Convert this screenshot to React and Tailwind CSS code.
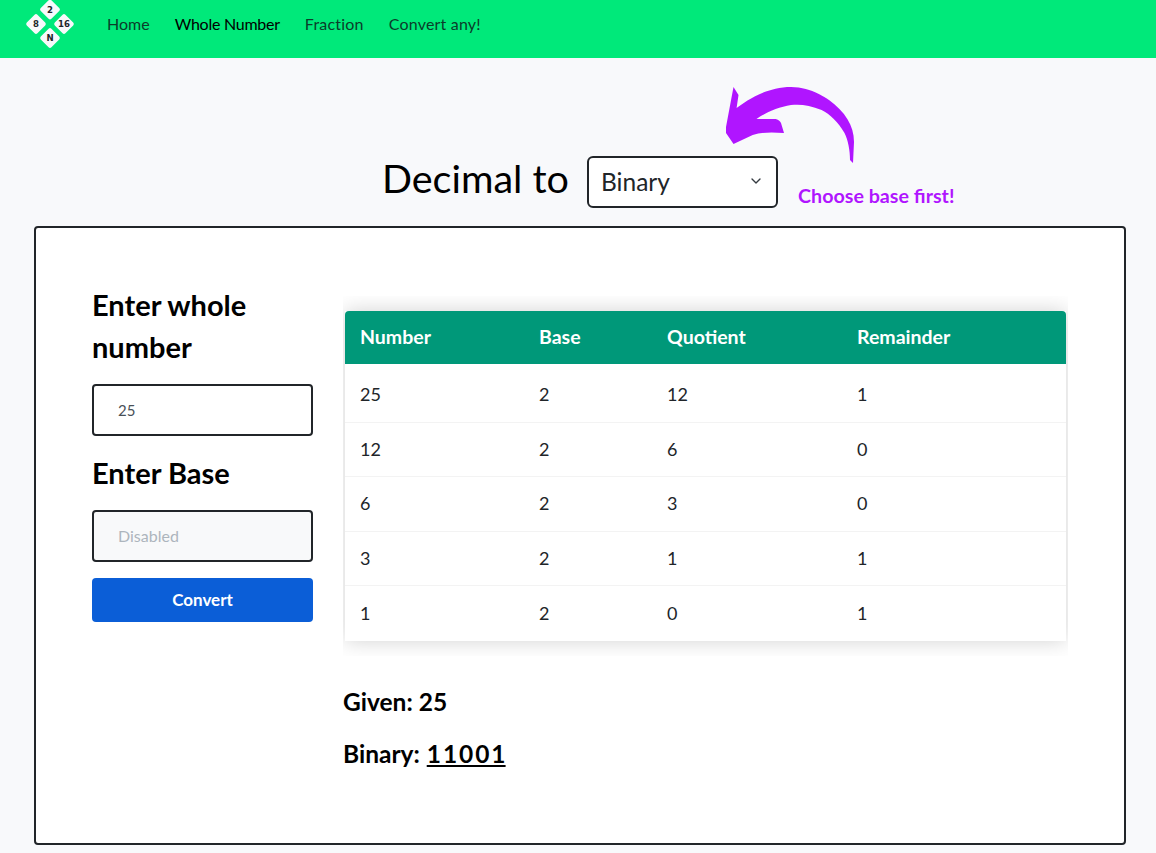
import React from 'react';
import { ChevronDown } from 'lucide-react';

const font = { fontFamily: 'Lato, "Open Sans", sans-serif' };

const rows = [
  [25, 2, 12, 1],
  [12, 2, 6, 0],
  [6, 2, 3, 0],
  [3, 2, 1, 1],
  [1, 2, 0, 1],
];

function Logo() {
  const tiles = [
    { x: 50, y: 9.5, label: '2' },
    { x: 36, y: 24, label: '8' },
    { x: 64, y: 24, label: '16' },
    { x: 50, y: 38, label: 'N' },
  ];
  return (
    <svg viewBox="25 0 50 50" className="w-[50px] h-[50px] shrink-0 -mt-[8px]">
      {tiles.map(t => (
        <g key={t.label}>
          <rect x={t.x - 7.5} y={t.y - 7.5} width="15" height="15" rx="2" fill="#f8f9fb" transform={`rotate(45 ${t.x} ${t.y})`} />
          <text x={t.x} y={t.y + 3.3} textAnchor="middle" fontSize="9.5" fontWeight="700" fill="#212529" fontFamily="'Liberation Sans Narrow', 'DejaVu Sans Condensed', sans-serif">{t.label}</text>
        </g>
      ))}
    </svg>
  );
}

function Arrow() {
  return (
    <svg viewBox="720 80 140 90" className="absolute left-[720px] top-[22px] w-[140px] h-[90px]">
      <path
        fill="#b015ff"
        d="M733.5 87 L738.5 95 L736.6 108 C745 102 765 87 791 87 C812 87 829 100 829 100 C845 112 854 125 854 142 L853 163 L850 160 C850 150 848 140 844.5 133 C838 122 830 114 821.6 110 C810 105 800 104 791 105 C778 107 765 113 756.5 119 L775.7 119 C779 120 780 121 781 123 L784 133 C772 132 762 132 752.7 135 L733.5 144 L726 133 L726 127 Z"
      />
    </svg>
  );
}

export default function App() {
  return (
    <div className="min-h-[853px] bg-[#f8f9fb] text-black" style={font}>
      <nav className="h-[58px] bg-[#00e97a] flex items-center pl-[25px]">
        <Logo />
        <ul className="flex items-center gap-[25px] ml-[32px] text-[16px] -mt-[10px] text-[#0b3d2a]">
          <li>Home</li>
          <li className="text-black tracking-[-0.25px]">Whole Number</li>
          <li className="tracking-[0.2px]">Fraction</li>
          <li className="tracking-[0.2px]">Convert any!</li>
        </ul>
      </nav>

      <div className="relative flex justify-center gap-[17px] pl-[4px] pt-[98px] pb-[18px]">
        <h1 className="text-[39.5px] leading-[44px] font-normal self-start w-[188px] whitespace-nowrap">Decimal to</h1>
        <div className="relative w-[191px] h-[52px]">
          <select className="w-full h-full appearance-none bg-white border-2 border-[#212529] rounded-[6px] pl-[12px] pt-[1px] text-[24.5px] text-[#212529]">
            <option>Binary</option>
          </select>
          <ChevronDown className="absolute right-[14px] top-[17px] w-[16px] h-[16px] text-[#343a40]" />
        </div>
        <p className="absolute left-[798px] top-[125px] text-[19.7px] leading-[26px] font-bold text-[#b015ff] whitespace-nowrap">Choose base first!</p>
        <Arrow />
      </div>

      <div className="ml-[34px] mr-[30px] h-[619px] bg-white border-2 border-[#212529] rounded-[4px] flex pl-[56px] pr-[56px] pt-[56px] gap-[30px]">
        <div className="w-[221px] shrink-0">
          <h2 className="text-[29px] leading-[42px] font-bold">Enter whole number</h2>
          <input readOnly value="25" className="block w-full h-[52px] mt-[16px] border-2 border-[#212529] rounded-[4px] pl-[24px] text-[15px] text-[#495057]" />
          <h2 className="text-[29px] leading-[42px] font-bold mt-[16px]">Enter Base</h2>
          <input disabled placeholder="Disabled" className="block w-full h-[52px] mt-[16px] bg-[#f8f9fa] border-2 border-[#212529] rounded-[4px] pl-[24px] pb-[2px] text-[16px] placeholder:text-[#adb5bd]" />
          <button className="block w-full h-[44px] mt-[16px] bg-[#0b5ed7] rounded-[4px] text-white text-[17px] font-bold">Convert</button>
        </div>

        <div className="flex-1">
          <div className="overflow-hidden px-[2px] py-[15px] mt-[12px]">
            <table className="w-full bg-white shadow-[0_0_20px_rgba(0,0,0,0.18)] text-[18px] text-[#212529] border-collapse">
              <thead>
                <tr className="h-[53px] bg-[#009879] text-white text-left text-[19.5px] font-bold">
                  <th className="pl-[15px] pb-[2px] w-[179px] rounded-tl-[4px]">Number</th>
                  <th className="pl-[15px] pb-[2px] w-[128px]">Base</th>
                  <th className="pl-[15px] pb-[2px] w-[190px]">Quotient</th>
                  <th className="pl-[15px] pb-[2px] rounded-tr-[4px]">Remainder</th>
                </tr>
              </thead>
              <tbody>
                {rows.map((row, i) => (
                  <tr key={i} className={`${i === 0 ? 'h-[58px]' : i === rows.length - 1 ? 'h-[55.6px]' : 'h-[54.6px]'} ${i < rows.length - 1 ? 'border-b border-[#f3f3f3]' : ''}`}>
                    {row.map((cell, j) => (
                      <td key={j} className={i === 0 ? 'pl-[15px] pt-[3px]' : 'pl-[15px]'}>{cell}</td>
                    ))}
                  </tr>
                ))}
              </tbody>
            </table>
          </div>
          <p className="text-[24.5px] leading-[32px] font-bold mt-[30px]">Given: 25</p>
          <p className="text-[24.5px] leading-[32px] font-bold mt-[20px]">Binary: <span className="underline ml-[1px] [word-spacing:-4px]">1 1 0 0 1</span></p>
        </div>
      </div>
    </div>
  );
}
